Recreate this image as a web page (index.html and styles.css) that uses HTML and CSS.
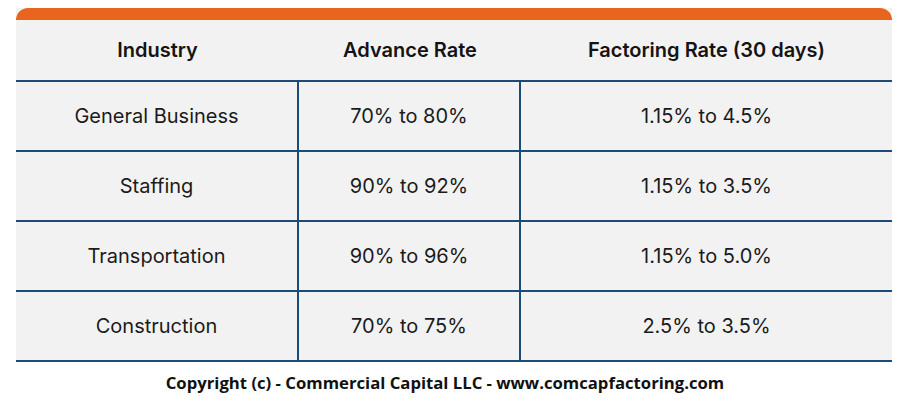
FILE: index.html
```html
<!DOCTYPE html>
<html lang="en">
<head>
<meta charset="utf-8">
<title>Factoring Rates by Industry</title>
<link rel="stylesheet" href="styles.css">
</head>
<body>
<div class="card">
  <div class="topbar"></div>
  <div class="row head">
    <div class="cell">Industry</div>
    <div class="cell">Advance Rate</div>
    <div class="cell">Factoring Rate (30 days)</div>
  </div>
  <div class="row body">
    <div class="cell">General Business</div>
    <div class="cell">70% to 80%</div>
    <div class="cell">1.15% to 4.5%</div>
  </div>
  <div class="row body">
    <div class="cell">Staffing</div>
    <div class="cell">90% to 92%</div>
    <div class="cell">1.15% to 3.5%</div>
  </div>
  <div class="row body">
    <div class="cell">Transportation</div>
    <div class="cell">90% to 96%</div>
    <div class="cell">1.15% to 5.0%</div>
  </div>
  <div class="row body">
    <div class="cell">Construction</div>
    <div class="cell">70% to 75%</div>
    <div class="cell">2.5% to 3.5%</div>
  </div>
</div>
<p class="copyright">Copyright (c) - Commercial Capital LLC - www.comcapfactoring.com</p>
</body>
</html>
```
FILE: styles.css
```css
html, body {
  margin: 0;
  padding: 0;
  background: #ffffff;
}

body {
  font-family: Inter, "Noto Sans", sans-serif;
  color: #1b1b1b;
}

.card {
  width: 876px;
  margin: 8px 0 0 16px;
  background: #f2f2f2;
}

.topbar {
  height: 12px;
  background: #e8641f;
  border-radius: 12px 12px 0 0;
}

.row {
  display: grid;
  grid-template-columns: 283px 222px 371px;
  border-bottom: 2px solid #1c4b78;
}

.cell {
  display: flex;
  align-items: center;
  justify-content: center;
  font-size: 20px;
}

.head .cell {
  height: 60px;
  font-weight: 600;
  color: #141414;
}

.body .cell {
  height: 68px;
  font-weight: 400;
}

.body .cell:nth-child(1),
.body .cell:nth-child(2) {
  border-right: 2px solid #1c4b78;
}

.copyright {
  margin: 9px 0 0 0;
  text-align: center;
  padding-right: 8px;
  font-family: "Open Sans", "Liberation Sans", sans-serif;
  font-weight: 700;
  font-size: 16.7px;
  color: #111111;
}
```
